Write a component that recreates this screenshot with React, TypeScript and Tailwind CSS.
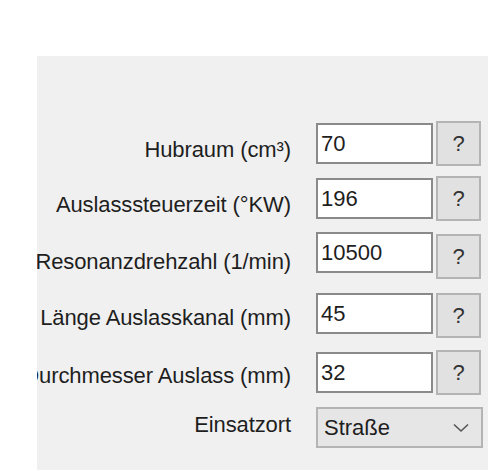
import React from "react";

type Row = {
  label: string;
  value: string;
  rowH: string;
  labelPt: string;
  boxMt: string;
  btnMt: string;
};

const rows: Row[] = [
  { label: "Hubraum (cm³)", value: "70", rowH: "h-[55px]", labelPt: "pt-[16px]", boxMt: "mt-[2px]", btnMt: "mt-0" },
  { label: "Auslasssteuerzeit (°KW)", value: "196", rowH: "h-[56px]", labelPt: "pt-[16px]", boxMt: "mt-[2px]", btnMt: "mt-0" },
  { label: "Resonanzdrehzahl (1/min)", value: "10500", rowH: "h-[61px]", labelPt: "pt-[17px]", boxMt: "mt-0", btnMt: "mt-[2px]" },
  { label: "Länge Auslasskanal (mm)", value: "45", rowH: "h-[57px]", labelPt: "pt-[12px]", boxMt: "mt-0", btnMt: "mt-0" },
  { label: "Durchmesser Auslass (mm)", value: "32", rowH: "h-[57px]", labelPt: "pt-[13px]", boxMt: "mt-[2px]", btnMt: "mt-0" },
];

export default function App() {
  return (
    <div
      className="w-[500px] h-[475px] bg-white overflow-hidden pt-[56px] pl-[37px]"
      style={{ fontFamily: '"Liberation Sans", Arial, sans-serif' }}
    >
      <div className="w-[451px] h-[414px] bg-[#f0f0f0] overflow-hidden pt-[65px] text-[22px] leading-[26px] text-[#1e1e1e]">
        {rows.map((r) => (
          <div key={r.label} className={`flex items-start ${r.rowH}`}>
            <div className={`w-[254px] shrink-0 flex justify-end whitespace-nowrap tracking-[-0.1px] ${r.labelPt}`}>
              <span>{r.label}</span>
            </div>
            <div className="ml-[25px] flex items-start">
              <div
                className={`w-[117px] h-[41px] bg-white border-2 border-[#8a8a8a] flex items-center pl-[3px] ${r.boxMt}`}
              >
                {r.value}
              </div>
              <div
                className={`ml-[3px] w-[45px] h-[45px] bg-[#e1e1e1] border-2 border-[#b4b4b4] flex items-center justify-center text-[#333] ${r.btnMt}`}
              >
                ?
              </div>
            </div>
          </div>
        ))}
        <div className="flex items-start h-[41px]">
          <div className="w-[254px] shrink-0 flex justify-end whitespace-nowrap tracking-[-0.1px] pt-[5px]">
            <span>Einsatzort</span>
          </div>
          <div className="ml-[25px] w-[167px] h-[41px] bg-[#e6e6e6] border-2 border-[#b4b4b4] flex items-center justify-between pl-[6px] pr-[12px]">
            <span>Straße</span>
            <svg width="16" height="10" viewBox="0 0 16 10" fill="none">
              <path d="M1 1.5 L8 8 L15 1.5" stroke="#555" strokeWidth="1.6" />
            </svg>
          </div>
        </div>
      </div>
    </div>
  );
}
